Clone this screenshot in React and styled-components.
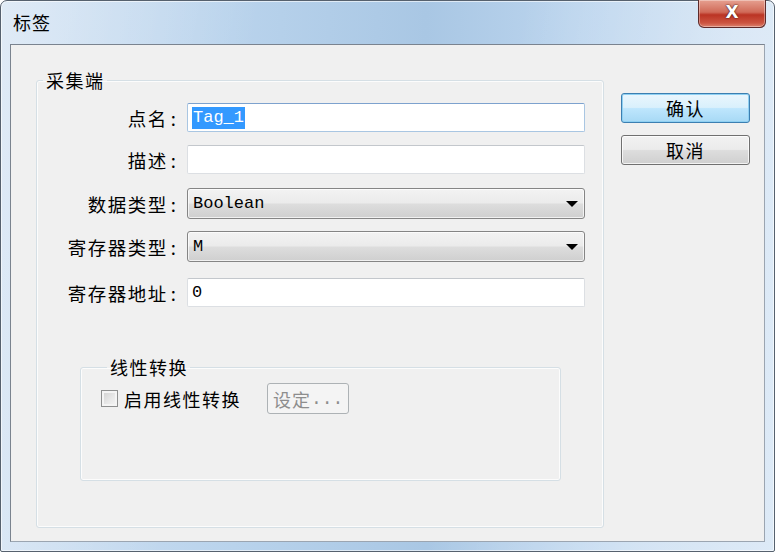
import React from "react";
import styled, { createGlobalStyle } from "styled-components";

const Global = createGlobalStyle`
  html, body { margin: 0; padding: 0; background: #ffffff; overflow: hidden; }
  * { box-sizing: border-box; }
`;

const CJK = `"Noto Sans CJK SC", "Noto Sans", sans-serif`;
const MONO = `"Liberation Mono", "DejaVu Sans Mono", monospace`;

const Window = styled.div`
  width: 775px;
  height: 552px;
  display: flex;
  flex-direction: column;
  border: 1px solid #56616e;
  border-radius: 7px 7px 2px 2px;
  background:
    linear-gradient(100deg, rgba(255,255,255,0.35) 0%, rgba(255,255,255,0) 30%, rgba(255,255,255,0) 60%, rgba(255,255,255,0.3) 85%),
    linear-gradient(90deg, #cfe0f2 0%, #b9d3ec 30%, #a9c7e4 55%, #bcd5ee 75%, #cfe1f3 100%);
  box-shadow: inset 0 0 0 1px rgba(255,255,255,0.6);
  font-family: ${CJK};
  color: #000;
`;

const TitleBar = styled.div`
  height: 43px;
  flex: none;
  display: flex;
  align-items: flex-start;
  justify-content: space-between;
  padding: 0 8px 0 12px;
`;

const TitleText = styled.div`
  font-size: 18px;
  line-height: 20px;
  margin-top: 11px;
  letter-spacing: 1px;
  color: #000;
`;

const CloseButton = styled.div`
  width: 68px;
  height: 28px;
  margin-top: -1px;
  border: 1px solid #5d2a2a;
  border-top: none;
  border-radius: 0 0 6px 6px;
  background: linear-gradient(180deg, #e6a090 0%, #d06a58 45%, #bb3424 55%, #cc5440 85%, #dc8470 100%);
  box-shadow: inset 0 0 0 1px rgba(255,255,255,0.35);
  display: flex;
  align-items: center;
  justify-content: center;
`;

const CloseGlyph = styled.span`
  font-family: "DejaVu Sans", sans-serif;
  font-weight: bold;
  font-size: 17px;
  line-height: 1;
  color: #fff;
  margin-top: -2px;
  text-shadow: 0 0 2px #4a1a14, 0 0 1px #4a1a14;
`;

const Client = styled.div`
  flex: 1;
  margin: 0 9px 9px 9px;
  background: #f0f0f0;
  border: 1px solid #7a838f;
  border-right-color: #9ba5b1;
  border-bottom-color: #9ba5b1;
  display: flex;
  align-items: flex-start;
  padding: 25px 0 0 25px;
  gap: 17px;
`;

const Group = styled.fieldset`
  margin: 0 0 0 ${p => p.$ml || 0}px;
  width: ${p => p.$w}px;
  height: ${p => p.$h}px;
  border: 1px solid #d5dfe5;
  border-radius: 3px;
  box-shadow: 0 0 0 1px rgba(255,255,255,0.8) inset;
  padding: ${p => p.$pad};
  min-inline-size: 0;
`;

const Legend = styled.legend`
  font-size: 18px;
  line-height: 20px;
  letter-spacing: 1.5px;
  padding: 0 2px 0 3px;
  margin-left: 6px;
  color: #000;
`;

const Form = styled.div`
  display: flex;
  flex-direction: column;
`;

const Row = styled.div`
  display: flex;
  align-items: center;
  margin-top: ${p => p.$mt || 0}px;
`;

const Label = styled.div`
  width: 139px;
  text-align: right;
  font-size: 18.5px;
  line-height: 20px;
  letter-spacing: 1.5px;
  white-space: nowrap;
  margin-right: 11px;
`;

const Colon = styled.span`
  margin-left: 3px;
  letter-spacing: 0;
`;

const TextBox = styled.div`
  width: 398px;
  height: 29px;
  background: #fff;
  border: 1px solid ${p => (p.$focus ? "#a9c6e2" : "#dcdfe3")};
  border-top-color: ${p => (p.$focus ? "#7da2ce" : "#c3c7cc")};
  border-radius: 2px;
  display: flex;
  align-items: center;
  padding-left: 4px;
  font-family: ${MONO};
  font-size: 17px;
`;

const Selected = styled.span`
  background: #3399ff;
  color: #fff;
  line-height: 22px;
  padding: 0 1px;
`;

const Combo = styled.div`
  width: 398px;
  height: 31px;
  border: 1px solid #858585;
  border-radius: 3px;
  background: linear-gradient(180deg, #f3f3f3 0%, #ebebeb 48%, #dddddd 52%, #cfcfcf 100%);
  box-shadow: inset 0 0 0 1px rgba(255,255,255,0.7);
  display: flex;
  align-items: center;
  justify-content: space-between;
  padding: 0 6px 0 5px;
  font-family: ${MONO};
  font-size: 17px;
`;

const Arrow = styled.span`
  width: 0;
  height: 0;
  border-left: 6px solid transparent;
  border-right: 6px solid transparent;
  border-top: 6px solid #000;
  margin-top: 1px;
`;

const Side = styled.div`
  display: flex;
  flex-direction: column;
  gap: 12px;
  padding-top: 23px;
`;

const Button = styled.div`
  width: 129px;
  height: 30px;
  border-radius: 3px;
  border: 1px solid ${p => (p.$default ? "#3c7fb1" : "#707070")};
  background: ${p =>
    p.$default
      ? "linear-gradient(180deg, #eaf6fd 0%, #d9f0fc 48%, #bee6fd 52%, #a7d9f5 100%)"
      : "linear-gradient(180deg, #f2f2f2 0%, #ebebeb 48%, #dddddd 52%, #cfcfcf 100%)"};
  box-shadow: inset 0 0 0 1px ${p => (p.$default ? "#8fd0f2" : "rgba(255,255,255,0.75)")};
  display: flex;
  align-items: center;
  justify-content: center;
  font-size: 18px;
  line-height: 20px;
  letter-spacing: 1.5px;
  color: #000;
`;

const LinearBody = styled.div`
  display: flex;
  align-items: center;
`;

const Check = styled.span`
  width: 17px;
  height: 17px;
  border: 1px solid #8e8f8f;
  background: linear-gradient(135deg, #cfcfcf 0%, #e9e9e9 60%, #f6f6f6 100%);
  box-shadow: inset 0 0 0 2px #f4f4f4;
  margin-right: 6px;
`;

const CheckLabel = styled.span`
  font-size: 18px;
  line-height: 20px;
  letter-spacing: 1.5px;
  margin-right: 26px;
`;

const DisabledButton = styled.div`
  width: 82px;
  height: 31px;
  border: 1px solid #adb2b5;
  border-radius: 3px;
  background: #f4f4f4;
  color: #8d8d8d;
  font-size: 18px;
  letter-spacing: 1px;
  display: flex;
  align-items: center;
  padding-left: 5px;
`;

const Dots = styled.span`
  font-family: ${MONO};
  font-size: 18px;
  letter-spacing: 0;
`;

const Spacer = styled.div`
  height: ${p => p.$h}px;
`;

const fields = [
  { label: "点名", mt: 0, kind: "focus", value: "Tag_1" },
  { label: "描述", mt: 13, kind: "text", value: "" },
  { label: "数据类型", mt: 14, kind: "combo", value: "Boolean" },
  { label: "寄存器类型", mt: 12, kind: "combo", value: "M" },
  { label: "寄存器地址", mt: 16, kind: "text", value: "0" },
];

export default function App() {
  return (
    <>
      <Global />
      <Window>
        <TitleBar>
          <TitleText>标签</TitleText>
          <CloseButton>
            <CloseGlyph>X</CloseGlyph>
          </CloseButton>
        </TitleBar>
        <Client>
          <Group $w={568} $h={458} $pad="13px 0 0 0">
            <Legend>采集端</Legend>
            <Form>
              {fields.map(f => (
                <Row key={f.label} $mt={f.mt}>
                  <Label>
                    {f.label}
                    <Colon>:</Colon>
                  </Label>
                  {f.kind === "combo" ? (
                    <Combo>
                      <span>{f.value}</span>
                      <Arrow />
                    </Combo>
                  ) : f.kind === "focus" ? (
                    <TextBox $focus>
                      <Selected>{f.value}</Selected>
                    </TextBox>
                  ) : (
                    <TextBox>{f.value}</TextBox>
                  )}
                </Row>
              ))}
            </Form>
            <Spacer $h={50} />
            <Group $w={481} $h={124} $pad="6px 0 0 20px" $ml={43}>
              <Legend>线性转换</Legend>
              <LinearBody>
                <Check />
                <CheckLabel>启用线性转换</CheckLabel>
                <DisabledButton>
                  设定<Dots>...</Dots>
                </DisabledButton>
              </LinearBody>
            </Group>
          </Group>
          <Side>
            <Button $default>确认</Button>
            <Button>取消</Button>
          </Side>
        </Client>
      </Window>
    </>
  );
}
